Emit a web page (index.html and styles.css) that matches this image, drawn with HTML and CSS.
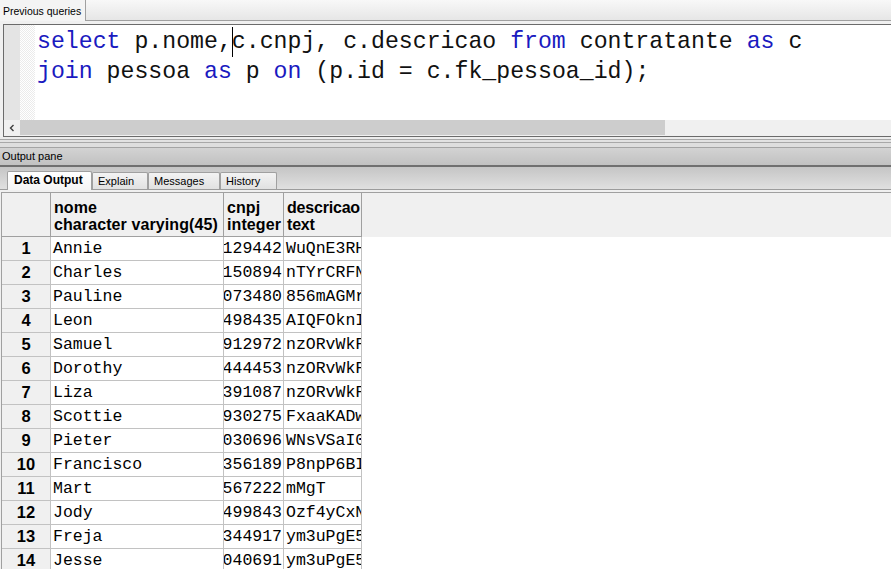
FILE: index.html
```html
<!DOCTYPE html>
<html>
<head>
<meta charset="utf-8">
<link rel="stylesheet" href="styles.css">
</head>
<body>
<div class="top-strip"><div class="prev-tab">Previous queries</div></div>
<div class="editor">
  <div class="editor-body">
    <div class="gutter"></div>
    <div class="fold"></div>
    <div class="code">
      <div class="line"><span class="kw">select</span> p.nome,<span class="caret"></span>c.cnpj, c.descricao <span class="kw">from</span> contratante <span class="kw">as</span> c</div>
      <div class="line"><span class="kw">join</span> pessoa <span class="kw">as</span> p <span class="kw">on</span> (p.id = c.fk_pessoa_id);</div>
    </div>
  </div>
  <div class="hscroll">
    <div class="hs-btn"><svg width="8" height="8" viewBox="0 0 8 8"><path d="M5.5 1 L2.5 4 L5.5 7" fill="none" stroke="#404040" stroke-width="1.4"/></svg></div>
    <div class="hs-thumb"></div>
  </div>
</div>
<div class="splitter"></div>
<div class="pane-title">Output pane</div>
<div class="out-tabs">
  <div class="otab active t-data">Data Output</div>
  <div class="otab t-explain">Explain</div>
  <div class="otab t-messages">Messages</div>
  <div class="otab t-history">History</div>
</div>
<div class="grid">
  <div class="grow ghead">
    <div class="hc"></div>
    <div class="hc">nome<br>character varying(45)</div>
    <div class="hc">cnpj<br>integer</div>
    <div class="hc">descricao<br>text</div>
  </div>
  <div class="grow"><div class="rn">1</div><div class="dc">Annie</div><div class="dc num"><span>21129442</span></div><div class="dc">WuQnE3RHk2</div></div>
  <div class="grow"><div class="rn">2</div><div class="dc">Charles</div><div class="dc num"><span>19150894</span></div><div class="dc">nTYrCRFNs8</div></div>
  <div class="grow"><div class="rn">3</div><div class="dc">Pauline</div><div class="dc num"><span>30073480</span></div><div class="dc">856mAGMrq1</div></div>
  <div class="grow"><div class="rn">4</div><div class="dc">Leon</div><div class="dc num"><span>14498435</span></div><div class="dc">AIQFOknIx4</div></div>
  <div class="grow"><div class="rn">5</div><div class="dc">Samuel</div><div class="dc num"><span>22912972</span></div><div class="dc">nzORvWkFj7</div></div>
  <div class="grow"><div class="rn">6</div><div class="dc">Dorothy</div><div class="dc num"><span>18444453</span></div><div class="dc">nzORvWkFj7</div></div>
  <div class="grow"><div class="rn">7</div><div class="dc">Liza</div><div class="dc num"><span>13391087</span></div><div class="dc">nzORvWkFj7</div></div>
  <div class="grow"><div class="rn">8</div><div class="dc">Scottie</div><div class="dc num"><span>29930275</span></div><div class="dc">FxaaKADwe3</div></div>
  <div class="grow"><div class="rn">9</div><div class="dc">Pieter</div><div class="dc num"><span>10030696</span></div><div class="dc">WNsVSaI0t5</div></div>
  <div class="grow"><div class="rn">10</div><div class="dc">Francisco</div><div class="dc num"><span>23356189</span></div><div class="dc">P8npP6BIu9</div></div>
  <div class="grow"><div class="rn">11</div><div class="dc">Mart</div><div class="dc num"><span>15567222</span></div><div class="dc">mMgT</div></div>
  <div class="grow"><div class="rn">12</div><div class="dc">Jody</div><div class="dc num"><span>24499843</span></div><div class="dc">Ozf4yCxNa2</div></div>
  <div class="grow"><div class="rn">13</div><div class="dc">Freja</div><div class="dc num"><span>13344917</span></div><div class="dc">ym3uPgE5r0</div></div>
  <div class="grow"><div class="rn">14</div><div class="dc">Jesse</div><div class="dc num"><span>10040691</span></div><div class="dc">ym3uPgE5r0</div></div>
</div>
</body>
</html>
```
FILE: styles.css
```css
* { box-sizing: border-box; margin: 0; padding: 0; }
html, body { width: 891px; height: 569px; overflow: hidden; }
body {
  background: #f0f0f0;
  font-family: "Liberation Sans", Arial, sans-serif;
  font-size: 11px;
  color: #000;
}

/* top tab strip */
.top-strip {
  height: 21px;
  border-bottom: 1px solid #a0a0a0;
  background: linear-gradient(#f8f8f8, #e6e6e6);
  display: flex;
}
.prev-tab {
  width: 86px;
  height: 21px;
  flex: none;
  background: #f4f4f4;
  border-right: 1px solid #a0a0a0;
  padding: 1px 0 0 3px;
  line-height: 20px;
  font-size: 10.5px;
  white-space: nowrap;
}

/* editor */
.editor {
  margin: 3px 0 0 3px;
  border: 1px solid #6b6b6b;
  border-right: none;
  background: #fff;
}
.editor-body { height: 95px; display: flex; overflow: hidden; }
.gutter { width: 16px; flex: none; background: #e4e4e4; }
.fold {
  width: 15px;
  flex: none;
  background: repeating-conic-gradient(#ebebeb 0 25%, #ffffff 0 50%) 0 0 / 2px 2px;
}
.code {
  flex: 1;
  padding: 2px 0 0 2px;
  font-family: "Liberation Mono", "Courier New", monospace;
  font-size: 23.2px;
  line-height: 30px;
  color: #111;
}
.line { white-space: pre; height: 30px; }
.kw { color: #1a1ac0; }
.caret {
  display: inline-block;
  width: 0;
  height: 30px;
  border-left: 1px solid #000;
  margin-right: -1px;
  vertical-align: top;
}
.hscroll { height: 16px; display: flex; background: #f0f0f0; }
.hs-btn {
  width: 16px;
  height: 15px;
  flex: none;
  display: flex;
  align-items: center;
  justify-content: center;
}
.hs-thumb { width: 645px; height: 15px; flex: none; background: #cdcdcd; }

/* splitter + output pane */
.splitter {
  height: 10px;
  background: linear-gradient(#ececec 0 2px, #a8a8a8 2px 3px, #e2e2e2 3px 5px, #a8a8a8 5px 6px, #dedede 6px);
}
.pane-title {
  height: 20px;
  border-top: 1px solid #a4a4a4;
  border-bottom: 2px solid #6f6f6f;
  background: linear-gradient(#d3d3d3, #c1c1c1);
  padding-left: 2px;
  line-height: 17px;
  font-size: 11px;
}
.out-tabs {
  height: 23px;
  border-bottom: 1px solid #9c9c9c;
  background: linear-gradient(#c5c5c5, #e0e0e0);
  display: flex;
  align-items: flex-end;
  padding-left: 7px;
}
.otab {
  height: 17px;
  flex: none;
  border: 1px solid #a0a0a0;
  border-bottom: none;
  border-radius: 2px 2px 0 0;
  background: linear-gradient(#f3f3f3, #e1e1e1);
  padding-left: 5px;
  line-height: 16px;
  font-size: 11px;
  white-space: nowrap;
}
.otab.active {
  height: 19px;
  margin-bottom: -1px;
  background: linear-gradient(#ffffff, #f5f5f5);
  font-weight: bold;
  font-size: 12px;
  line-height: 17px;
  padding-left: 6px;
}
.t-data { width: 85px; }
.t-explain { width: 56px; }
.t-messages { width: 72px; }
.t-history { width: 57px; }

/* data grid */
.grid {
  margin: 2px 0 0 1px;
  border-top: 1px solid #a0a0a0;
  border-left: 1px solid #a0a0a0;
  background: #fff;
}
.grow {
  display: grid;
  grid-template-columns: 49px 173px 60px 78px;
  height: 24px;
}
.ghead { height: 44px; background: #f0f0f0; }
.hc {
  border-right: 1px solid #a0a0a0;
  border-bottom: 1px solid #a0a0a0;
  padding: 6px 0 0 3px;
  font-weight: bold;
  font-size: 16px;
  letter-spacing: 0.1px;
  line-height: 17px;
  white-space: nowrap;
  overflow: hidden;
}
.hc:last-child { letter-spacing: -0.2px; }
.rn {
  background: #f0f0f0;
  border-right: 1px solid #c2c2c2;
  border-bottom: 1px solid #c2c2c2;
  text-align: center;
  font-weight: bold;
  font-size: 16.5px;
  line-height: 23px;
}
.dc {
  border-right: 1px solid #c2c2c2;
  border-bottom: 1px solid #c2c2c2;
  padding-left: 2px;
  font-family: "Liberation Mono", "Courier New", monospace;
  font-size: 16.5px;
  line-height: 23px;
  white-space: nowrap;
  overflow: hidden;
}
.dc.num {
  display: flex;
  justify-content: flex-end;
  padding: 0 1px 0 0;
}
.dc.num span { flex: none; }
```
